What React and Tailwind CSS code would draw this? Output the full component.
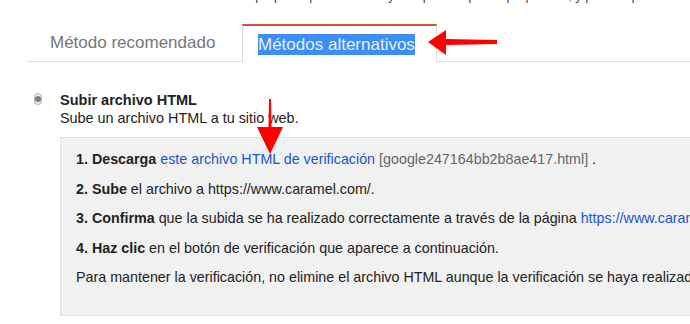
export default function App() {
  const font = { fontFamily: '"Liberation Sans", Arial, sans-serif' };
  return (
    <div className="relative w-[690px] h-[324px] overflow-hidden bg-white" style={font}>
      {/* cut-off top line */}
      <div className="h-[5px] overflow-hidden">
        <div className="mt-[-12px] pl-[120px] text-[13px] leading-[16px] text-[#444] whitespace-nowrap">
          Seleccione el método apropiado para verificar y comprobar que es propietario, y pulse aquí
        </div>
      </div>

      {/* tabs */}
      <div className="mt-[19px] ml-[27px] flex items-end border-b border-[#dcdcdc] h-[38px]">
        <div className="w-[215px] h-[36px] flex items-center pl-[23px] text-[17px] text-[#777]">
          Método recomendado
        </div>
        <div className="relative mb-[-1px] w-[195px] h-[38px] bg-white border-t-2 border-[#dd4b39] border-x border-x-[#dcdcdc] flex items-center pl-[15px] text-[17px]">
          <span className="bg-[#3a8ef6] text-[#e6efff] leading-[21px]">Métodos alternativos</span>
        </div>
      </div>

      {/* horizontal red arrow */}
      <svg className="absolute left-[426px] top-[28px]" width="74" height="30" viewBox="0 0 74 30">
        <polygon points="2,14 20,2 20,11 71,12 71,16 20,17 20,27" fill="#ff0000" />
      </svg>

      {/* option */}
      <div className="mt-[30px] flex">
        <div className="ml-[34px] mt-[1px] w-[12px] h-[12px] rounded-full border border-[#b8b8b8] bg-[#ebebeb] flex items-center justify-center">
          <div className="w-[6px] h-[6px] rounded-full bg-[#808080]"></div>
        </div>
        <div className="ml-[18px] flex-1">
          <div className="text-[14.5px] font-bold text-[#222] leading-[17px]">Subir archivo HTML</div>
          <div className="text-[14.4px] text-[#222] leading-[17px] mt-[1px]">Sube un archivo HTML a tu sitio web.</div>
          <div className="mt-[10px] h-[179px] bg-[#f1f1f1] border border-[#e0e0e0] border-r-0 pl-[15px] pt-[13px] text-[14.3px] text-[#222] whitespace-nowrap flex flex-col gap-[13.5px] leading-[16px]">
            <div>
              <b>1. Descarga</b> <span className="text-[#1a55cc]">este archivo HTML de verificación</span>{' '}
              <span className="text-[#666]">[google247164bb2b8ae417.html]</span> .
            </div>
            <div><b>2. Sube</b> el archivo a https://www.caramel.com/.</div>
            <div>
              <b>3. Confirma</b> que la subida se ha realizado correctamente a través de la página{' '}
              <span className="text-[#1a55cc]">https://www.caramel.com/google247164bb2b8ae417.html</span>
            </div>
            <div><b>4. Haz clic</b> en el botón de verificación que aparece a continuación.</div>
            <div>Para mantener la verificación, no elimine el archivo HTML aunque la verificación se haya realizado correctamente.</div>
          </div>
        </div>
      </div>

      {/* vertical red arrow */}
      <svg className="absolute left-[255px] top-[98px]" width="30" height="58" viewBox="0 0 30 58">
        <polygon points="14,1 16,1 16.5,29 28,29 15,56 2,29 13.5,29" fill="#ff0000" />
      </svg>
    </div>
  );
}
